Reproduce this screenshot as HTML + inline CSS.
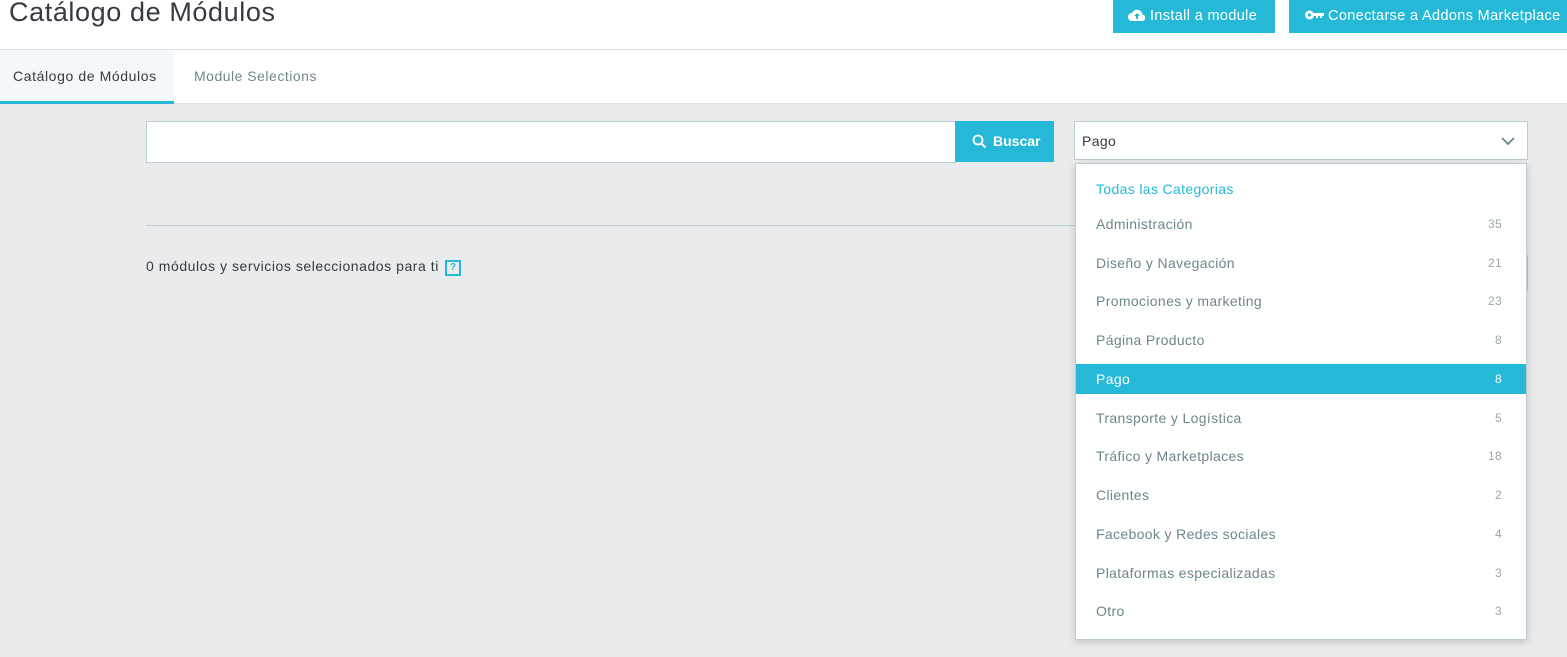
<!DOCTYPE html><html><head><meta charset="utf-8"><style>
*{box-sizing:border-box;margin:0;padding:0}
body{width:1567px;height:657px;overflow:hidden;background:#eaebed;font-family:"Liberation Sans",sans-serif;position:relative;color:#363a41;letter-spacing:0.35px}
.hdr{position:absolute;left:0;top:0;width:1567px;height:50px;background:#fff;border-bottom:1px solid #dfe3e6}
h1{position:absolute;left:9px;top:-3px;font-weight:normal;font-size:27px;color:#363a41;letter-spacing:0.6px}
.btn{position:absolute;top:0;height:33px;background:#25b9d7;color:#fff;font-size:14.5px;line-height:32px;padding-left:14px;white-space:nowrap}
.tabs{position:absolute;left:0;top:50px;width:1567px;height:54px;background:#fff;border-bottom:1px solid #dfe3e6}
.tab{position:absolute;top:0;height:54px;line-height:52px;font-size:14px;white-space:nowrap}
.search{position:absolute;left:146px;top:121px;width:810px;height:42px;background:#fff;border:1px solid #bbcdd2}
.sbtn{position:absolute;left:955px;top:121px;width:99px;height:41px;background:#25b9d7;color:#fff;font-size:14px;line-height:41px;padding-left:38px;font-weight:bold;letter-spacing:0}
.sel{position:absolute;left:1074px;top:121px;width:454px;height:39px;background:#fff;border:1px solid #bbcdd2;font-size:14px;line-height:38px;padding-left:7px}
.dd{position:absolute;left:1075px;top:163px;width:452px;height:477px;background:#fff;border:1px solid #bbcdd2;box-shadow:0 2px 8px rgba(0,0,0,.18)}
.it{position:absolute;left:0;width:450px;height:30px;line-height:30px;font-size:14px;color:#6c868e;padding-left:20px}
.it span{position:absolute;right:24px;font-size:12px;color:#9aa6ab}
.it.on{background:#25b9d7;color:#fff}.it.on span{color:#fff}
</style></head><body>
<div class="hdr"><h1>Catálogo de Módulos</h1>
<div class="btn" style="left:1113px;width:162px"><svg width="20" height="14" viewBox="0 0 20 14" style="vertical-align:-2px;margin-right:3px"><path d="M5 13a4 4 0 0 1 0-8 5.5 5.5 0 0 1 10.5 1.5A3.3 3.3 0 0 1 15.5 13z" fill="#fff"/><path d="M10 5l-3 3h2v3h2V8h2z" fill="#25b9d7"/></svg>Install a module</div>
<div class="btn" style="left:1289px;width:278px;padding-left:16px"><svg width="19" height="10" viewBox="0 0 19 10" style="vertical-align:0;margin-right:4px"><circle cx="4.5" cy="5" r="4.5" fill="#fff"/><circle cx="4.5" cy="5" r="1.6" fill="#25b9d7"/><path d="M8 3h11v3h-2v2h-2V6h-2v2h-2V6H8z" fill="#fff"/></svg>Conectarse a Addons Marketplace</div>
</div>
<div class="tabs">
<div class="tab" style="left:0;width:174px;background:#f4f8fb;border-bottom:3px solid #25b9d7;padding-left:13px;color:#363a41;letter-spacing:0.6px">Catálogo de Módulos</div>
<div class="tab" style="left:194px;color:#6c868e;letter-spacing:0.5px">Module Selections</div>
</div>
<div class="search"></div>
<div class="sbtn"><svg width="15" height="15" viewBox="0 0 15 15" style="position:absolute;left:17px;top:13px"><circle cx="6" cy="6" r="4.5" fill="none" stroke="#fff" stroke-width="1.8"/><path d="M9.5 9.5l4 4" stroke="#fff" stroke-width="2"/></svg>Buscar</div>
<div class="sel">Pago<svg width="14" height="9" viewBox="0 0 14 9" style="position:absolute;right:12px;top:15px"><path d="M1 1l6 6 6-6" fill="none" stroke="#6c868e" stroke-width="1.8"/></svg></div>
<div style="position:absolute;left:146px;top:225px;width:930px;height:1px;background:#bbcdd2"></div>
<div style="position:absolute;left:1526px;top:255px;width:2px;height:36px;background:#bbcdd2"></div>
<div style="position:absolute;left:146px;top:258px;font-size:14px;color:#363a41;letter-spacing:0.55px">0 módulos y servicios seleccionados para ti</div>
<div style="position:absolute;left:445px;top:260px;width:16px;height:16px;border:2px solid #25b9d7;color:#25b9d7;font-size:10px;font-weight:bold;text-align:center;line-height:12px;letter-spacing:0">?</div>
<div class="dd">
<div class="it" style="top:10px;color:#25b9d7">Todas las Categorias</div>
<div class="it" style="top:45px">Administración<span>35</span></div>
<div class="it" style="top:84px">Diseño y Navegación<span>21</span></div>
<div class="it" style="top:122px">Promociones y marketing<span>23</span></div>
<div class="it" style="top:161px">Página Producto<span>8</span></div>
<div class="it on" style="top:200px">Pago<span>8</span></div>
<div class="it" style="top:239px">Transporte y Logística<span>5</span></div>
<div class="it" style="top:277px">Tráfico y Marketplaces<span>18</span></div>
<div class="it" style="top:316px">Clientes<span>2</span></div>
<div class="it" style="top:355px">Facebook y Redes sociales<span>4</span></div>
<div class="it" style="top:394px">Plataformas especializadas<span>3</span></div>
<div class="it" style="top:432px">Otro<span>3</span></div>
</div>
</body></html>
